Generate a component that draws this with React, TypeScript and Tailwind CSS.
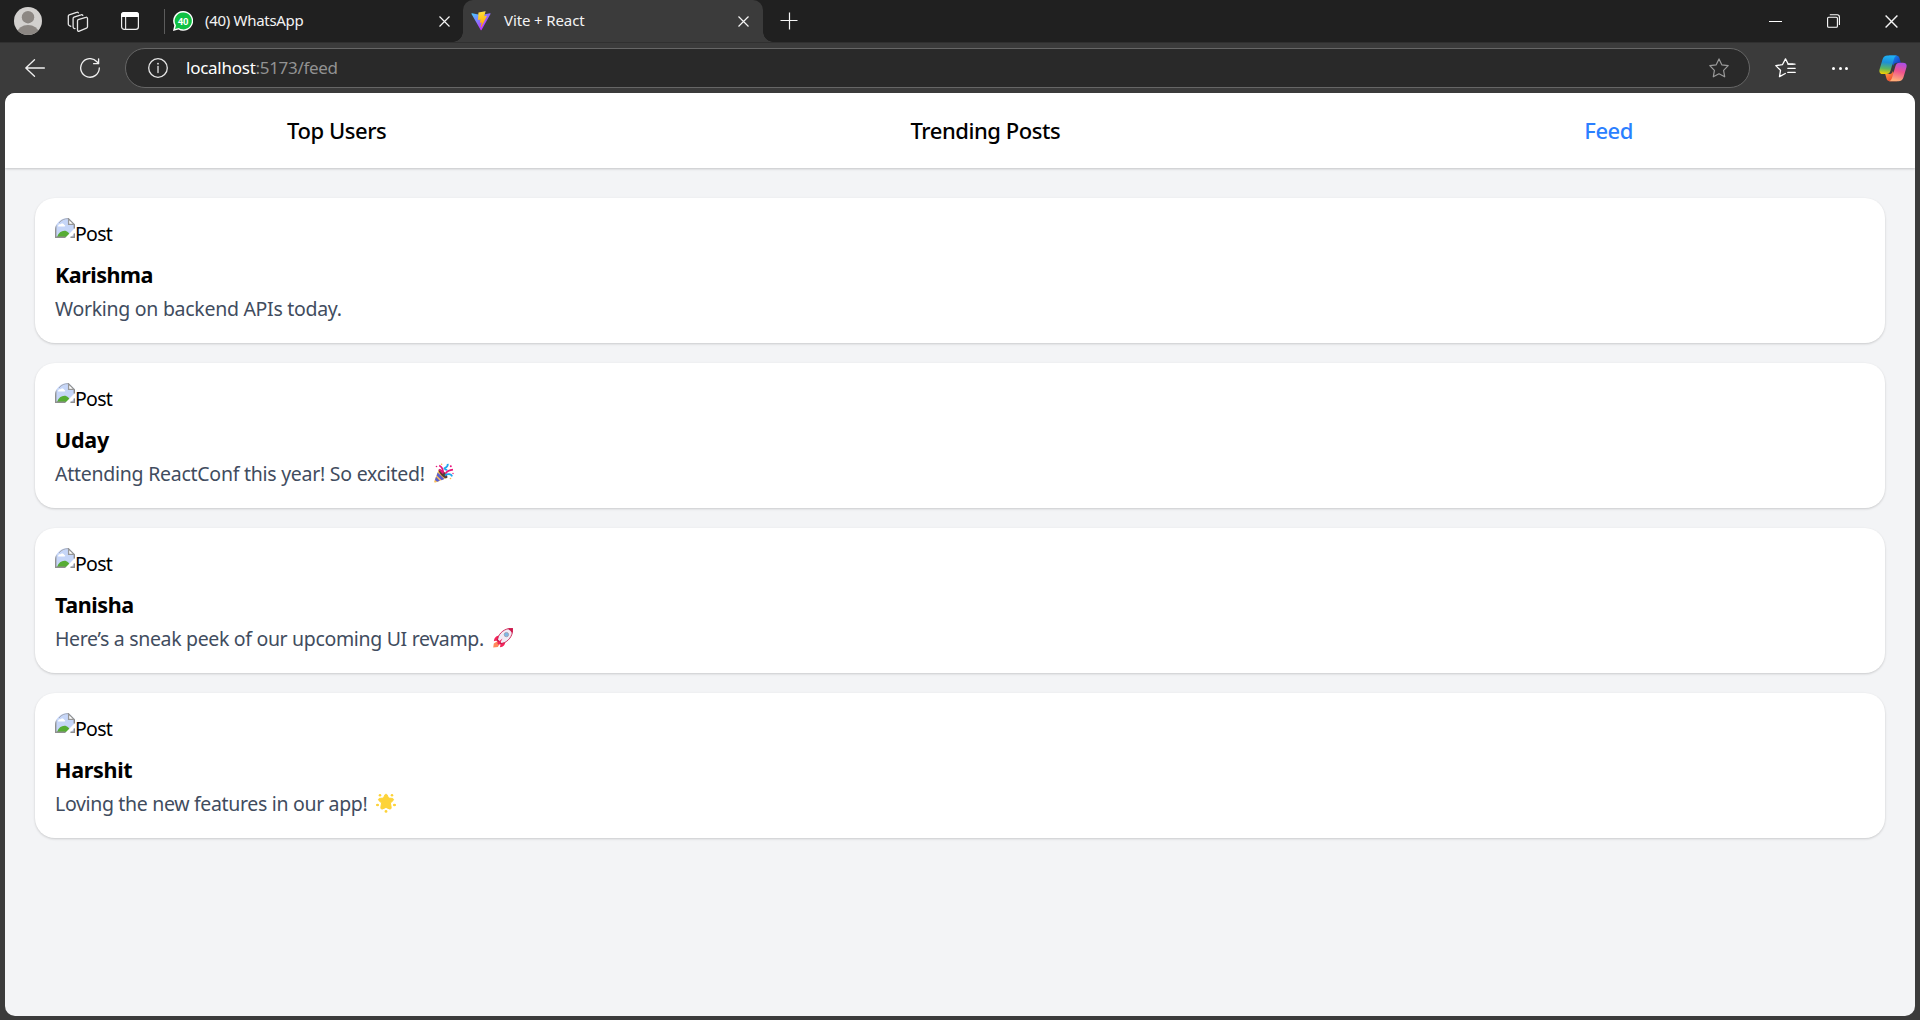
import type { ReactNode } from "react";

function CloseIcon({ size = 11 }: { size?: number }) {
  return (
    <svg width={size} height={size} viewBox="0 0 11 11" fill="none" stroke="#f5f5f5" strokeWidth="1.2">
      <path d="M.5.5l10 10M10.5.5l-10 10" />
    </svg>
  );
}

function AvatarIcon() {
  return (
    <svg width="28" height="28" viewBox="0 0 28 28">
      <defs>
        <clipPath id="avatar">
          <circle cx="14" cy="14" r="14" />
        </clipPath>
      </defs>
      <circle cx="14" cy="14" r="14" fill="#d2d0ce" />
      <g clipPath="url(#avatar)" fill="#8c8783">
        <circle cx="14" cy="10.2" r="6.2" />
        <ellipse cx="14" cy="25.3" rx="10.5" ry="7.3" />
      </g>
    </svg>
  );
}

function WorkspacesIcon() {
  return (
    <svg width="22" height="22" viewBox="0 0 22 22" fill="none" stroke="#e6e6e6" strokeWidth="1.3" strokeLinejoin="round" strokeLinecap="round">
      <path d="M11.2 8.6l7.6-2.3c.9-.3 1.7.3 1.7 1.2v8.3c0 .7-.4 1.200-1 1.400l-7.2 3c-.9.4-1.800-.2-1.800-1.200V9.800c0-.6.2-1 .7-1.200z" />
      <path d="M8 17.600l-1-.3c-.6-.3-.9-.8-.9-1.500V7.500c0-.6.3-1.100.9-1.300L14 3.800c.8-.3 1.500 0 1.800.6" />
      <path d="M3.800 15.300l-1.600-.8c-.6-.3-.9-.8-.9-1.500V5.100c0-.6.3-1.100.9-1.300l7.400-2.500c.8-.3 1.400 0 1.800.5" />
    </svg>
  );
}

function TabActionsIcon() {
  return (
    <svg width="18" height="18" viewBox="0 0 18 18" fill="none">
      <rect x=".6" y=".6" width="16.800" height="16.800" rx="2.600" stroke="#f0f0f0" strokeWidth="1.200" />
      <path d="M0 5V3a3 3 0 013-3h12a3 3 0 013 3v2z" fill="#fff" />
      <path d="M4.600 5v12.500" stroke="#e0e0e0" strokeWidth="1.200" />
    </svg>
  );
}

function WhatsAppBadge() {
  return (
    <svg width="20" height="20" viewBox="0 0 20 20">
      <path d="M10.200 0a9.800 9.900 0 11-4.700 18.500L0 19.900l1.300-5.300A9.800 9.900 0 0110.200 0z" fill="#fff" />
      <path d="M10.200 1.400a8.400 8.500 0 11-4.400 15.600L2 18l1-3.600A8.400 8.500 0 0110.200 1.400z" fill="#0fc143" />
      <text x="10.100" y="13.500" textAnchor="middle" fill="#fff" fontSize="9.500" fontWeight="700" fontFamily="Roboto, sans-serif" textLength="10.500">
        40
      </text>
    </svg>
  );
}

function ViteLogo() {
  return (
    <svg width="20" height="20" viewBox="0 0 410 404" fill="none">
      <defs>
        <linearGradient id="vite-body" x1="6" y1="33" x2="235" y2="344" gradientUnits="userSpaceOnUse">
          <stop stopColor="#41D1FF" />
          <stop offset="1" stopColor="#BD34FE" />
        </linearGradient>
        <linearGradient id="vite-bolt" x1="194.651" y1="8.818" x2="236.076" y2="292.989" gradientUnits="userSpaceOnUse">
          <stop stopColor="#FFEA83" />
          <stop offset=".083" stopColor="#FFDD35" />
          <stop offset="1" stopColor="#FFA800" />
        </linearGradient>
      </defs>
      <path d="M399.641 59.525L215.643 388.545c-3.799 6.793-13.559 6.834-17.415.073L10.582 59.556C6.380 52.190 12.680 43.267 21.028 44.759l184.195 32.923c1.175.21 2.378.208 3.553-.006l180.343-32.870c8.320-1.517 14.649 7.337 10.522 14.719z" fill="url(#vite-body)" />
      <path d="M292.965 1.574L156.801 28.255c-2.238.439-3.906 2.332-4.040 4.609l-8.376 141.464c-.197 3.332 2.863 5.918 6.115 5.168l37.910-8.749c3.547-.818 6.752 2.306 6.023 5.873l-11.263 55.153c-.758 3.712 2.727 6.886 6.352 5.785l23.415-7.114c3.630-1.102 7.118 2.081 6.350 5.796l-17.899 86.633c-1.120 5.419 6.088 8.374 9.094 3.728l2.008-3.103 110.954-221.428c1.858-3.707-1.346-7.935-5.418-7.149l-39.022 7.531c-3.667.707-6.787-2.708-5.752-6.296l25.469-88.291c1.036-3.594-2.094-7.012-5.756-6.291z" fill="url(#vite-bolt)" />
    </svg>
  );
}

function StarIcon() {
  return (
    <svg width="20" height="20" viewBox="0 0 20 20" fill="none" stroke="#9a9a9a" strokeWidth="1.200" strokeLinejoin="round">
      <path d="M10 .9l2.800 5.900 6.400.9-4.600 4.600 1.100 6.500L10 15.800l-5.700 3 1.100-6.500L.8 7.700l6.400-.9z" />
    </svg>
  );
}

function FavoritesIcon() {
  return (
    <svg width="21" height="20" viewBox="0 0 21 20" fill="none" stroke="#fff" strokeWidth="1.300" strokeLinejoin="round" strokeLinecap="round">
      <path d="M18 6.200h-4.700L10.500.9 7.400 6.700.8 7.600l4.700 4.700-1 6.300 5.800-3.100" />
      <path d="M13 6.200h7M12.800 10.300h7.400M12.800 14.400h7.400" />
    </svg>
  );
}

function CopilotIcon() {
  return (
    <svg width="28" height="27" viewBox="0 0 28 27">
      <defs>
        <linearGradient id="cp-left" x1="8" y1="1" x2="6" y2="19" gradientUnits="userSpaceOnUse">
          <stop stopColor="#1fb0f2" />
          <stop offset=".35" stopColor="#1c8fd8" />
          <stop offset=".7" stopColor="#5cb660" />
          <stop offset="1" stopColor="#f5d000" />
        </linearGradient>
        <linearGradient id="cp-top" x1="13" y1="1" x2="20" y2="8" gradientUnits="userSpaceOnUse">
          <stop stopColor="#1b8cf0" />
          <stop offset="1" stopColor="#173fc4" />
        </linearGradient>
        <linearGradient id="cp-right" x1="23" y1="7" x2="18" y2="26" gradientUnits="userSpaceOnUse">
          <stop stopColor="#a44df0" />
          <stop offset=".5" stopColor="#f0538d" />
          <stop offset="1" stopColor="#ffb078" />
        </linearGradient>
        <linearGradient id="cp-bottom" x1="8" y1="19" x2="14" y2="26" gradientUnits="userSpaceOnUse">
          <stop stopColor="#ff8a3d" />
          <stop offset="1" stopColor="#e8402f" />
        </linearGradient>
      </defs>
      <path d="M10 .6h7c2 0 3 .9 3.500 2.700l1.300 4.400h-3.500c-2.300 0-3.500 1-4.200 3.200z" fill="url(#cp-top)" />
      <path d="M18 26.200h-7c-2 0-3-.9-3.500-2.700l-1.300-4.400h3.500c2.300 0 3.500-1 4.200-3.200z" fill="url(#cp-bottom)" />
      <path d="M8.800.6H18c-1.800.4-2.500 1.700-3.100 3.700l-3.300 11.300c-.7 2.500-2 3.500-4.300 3.500H4c-3 0-4.200-1.900-3.400-4.800L3.500 4.500C4.300 1.900 5.900.6 8.800.6z" fill="url(#cp-left)" />
      <path d="M19.200 26.200H10c1.800-.4 2.500-1.700 3.100-3.700l3.300-11.300c.7-2.500 2-3.500 4.300-3.500H24c3 0 4.200 1.900 3.400 4.800l-2.900 9.800c-.8 2.600-2.400 3.900-5.300 3.900z" fill="url(#cp-right)" />
    </svg>
  );
}

function BrokenImageIcon() {
  return (
    <svg width="20" height="20" viewBox="0 0 20 20" className="shrink-0">
      <defs>
        <clipPath id="corner">
          <path d="M0 20V12.500A12.500 12.500 0 0112.500 0H14l6 6v14z" />
        </clipPath>
      </defs>
      <g clipPath="url(#corner)">
        <path d="M0 0h14l6 6v14H0z" fill="#c6d6f8" />
        <path d="M3 8.500c0-2 1.600-2.500 2.500-2.200.5-1.300 3.500-1.300 3.800.7 1.200.2 1.200 1.500.2 1.500z" fill="#fff" />
        <path d="M2 19c1.500-4.200 4.200-6.300 7.500-6.300 2.500 0 5.500 2.500 6.500 6.300z" fill="#56ac35" />
        <path d="M10 20L20 10v4.800L15 20z" fill="#fff" />
        <path d="M.7 0v19.300H10.500M19.300 6v4.500M19.300 15.500v3.800H15.500" stroke="#8f8f8f" strokeWidth="1.400" fill="none" />
        <path d="M4 5C6.500 1.800 9.500.6 13.300.6" stroke="#a5a9b3" strokeWidth="1" fill="none" />
        <path d="M13.600.8v5.600h5.600z" fill="#fff" stroke="#969696" strokeWidth="1.300" />
      </g>
    </svg>
  );
}

function PartyEmoji() {
  return (
    <svg width="20" height="20" viewBox="0 0 20 20">
      <path d="M4.800 6.500C8 6 13 10.500 13.200 14.800L1.600 19.500C.5 19.800 0 19.200.2 18.200z" fill="#fcc05c" />
      <path d="M3.600 9.600l6.700 6.500-2.700 1.100-5-4.800zM2 13.800l3.800 4-2.600 1L1 16.900z" fill="#5a5fd0" />
      <path d="M5 6.300c2-1 8.700 4.900 8.500 8-.6 1.700-3 1-5.200-1.100C5.800 11 3.900 7.600 5 6.300z" fill="#5b3b35" />
      <path d="M5.200 2.500c2.500 1.300 4 4 3.800 7.300M9 10.500c-.8-2-2.200-3.200-4-4" stroke="#e8177c" strokeWidth="1.800" fill="none" />
      <path d="M13.800.8c.3 2.200-1.200 3.400-3.300 4.500.5 1.200 1.400 1.600 2.800 1.500" stroke="#20a5ee" strokeWidth="1.800" fill="none" />
      <path d="M11.500 10.500c1.700-2.300 4.300-3.500 7.500-3.800" stroke="#e8177c" strokeWidth="1.800" fill="none" />
      <path d="M11 12.500c3.200-2.200 6-1.500 7.200.8" stroke="#20a5ee" strokeWidth="1.800" fill="none" />
      <circle cx="2.500" cy="3.500" r=".8" fill="#e8177c" />
      <circle cx="7.600" cy="1.300" r=".8" fill="#fcb94d" />
      <circle cx="16.800" cy="3.300" r="1" fill="#e8177c" />
      <circle cx="16.500" cy="15.500" r=".8" fill="#fcb94d" />
      <circle cx="19" cy="10.500" r=".7" fill="#e8177c" />
    </svg>
  );
}

function RocketEmoji() {
  return (
    <svg width="20" height="20" viewBox="0 0 20 20">
      <path d="M4.700 13L.8 15.600.2 19.600l4.600-.6 2.300-3.600z" fill="#ff8a5c" />
      <path d="M6.300 7.800C3.300 7.600 1.300 9.500.8 13.200l4.400-1zM12.200 13.700c.2 3-1.600 5-5.300 5.600l1-4.500z" fill="#f4245a" />
      <path d="M19.700.3C13.500.2 8.700 2.600 5.500 8.200L4.200 12.600l3.200 3.200 4.400-1.300C17.400 11.300 19.800 6.500 19.700.3z" fill="#f1ecf5" stroke="#cc174b" strokeWidth=".9" />
      <path d="M19.800.2c.1 2-.1 3.600-.6 5.300C18 3.300 16.700 2 14.500.8c1.700-.4 3.400-.6 5.300-.6zM4.500 11l4.500 4.500-1.600.9-3.800-3.800z" fill="#cc174b" />
      <path d="M9.500 10.500L4 15l2 2z" fill="#f4245a" />
      <circle cx="13.400" cy="6.600" r="2.200" fill="#7cb8e8" stroke="#9b9ba8" strokeWidth=".8" />
    </svg>
  );
}

function StarEmoji() {
  return (
    <svg width="20" height="20" viewBox="0 0 20 20" fill="#fdd339">
      <path d="M10 1.200c.5 0 .9.200 1.100.7l1.500 3.200 3.700.3c1.200.1 1.600 1.400.8 2.100l-2.700 2.500.8 4.500c.2 1.100-.9 1.900-1.900 1.400L10 14.400l-3.300 1.500c-1 .5-2.100-.3-1.900-1.400l.8-4.500-2.700-2.500c-.8-.7-.4-2 .8-2.100l3.700-.3 1.500-3.200c.2-.5.600-.7 1.100-.7z" stroke="#fdd339" />
      <circle cx="4" cy="2.200" r="1.300" />
      <circle cx="16" cy="2.200" r="1.300" />
      <ellipse cx="1.500" cy="12" rx="1.600" ry="1.200" />
      <ellipse cx="18.500" cy="12" rx="1.600" ry="1.200" />
      <circle cx="10" cy="18.400" r="1.400" />
    </svg>
  );
}

function TitleBar() {
  return (
    <div className="flex h-[42px] bg-[#202020] text-[15px] text-[#f3f3f3]">
      <div className="flex w-[463px] items-center">
        <div className="ml-[14px]">
          <AvatarIcon />
        </div>
        <div className="ml-[25px] pt-px">
          <WorkspacesIcon />
        </div>
        <div className="ml-[32px]">
          <TabActionsIcon />
        </div>
        <div className="ml-[25px] h-[25px] w-px bg-[#5c5c5c]" />
        <div className="ml-[8px]">
          <WhatsAppBadge />
        </div>
        <span className="ml-[12px] pb-[2px] tracking-[-0.300px]">(40) WhatsApp</span>
        <div className="mr-[13px] ml-auto pt-px">
          <CloseIcon />
        </div>
      </div>
      <div className="relative flex w-[300px] items-center rounded-t-[10px] bg-[#3b3b3b]">
        <div className="absolute right-full bottom-0 size-[10px] bg-[radial-gradient(circle_at_0_0,#202020_9.500px,#3b3b3b_10px)]" />
        <div className="absolute bottom-0 left-full size-[10px] bg-[radial-gradient(circle_at_100%_0,#202020_9.500px,#3b3b3b_10px)]" />
        <div className="ml-[8px]">
          <ViteLogo />
        </div>
        <span className="ml-[13px] pb-[2px] tracking-[-0.120px]">Vite + React</span>
        <div className="mr-[14px] ml-auto pt-px">
          <CloseIcon />
        </div>
      </div>
      <div className="flex grow items-center">
        <svg className="ml-[17px]" width="18" height="18" viewBox="0 0 18 18" fill="none" stroke="#f5f5f5" strokeWidth="1.200">
          <path d="M9.500 .5v17M.5 8.500h17" />
        </svg>
        <div className="mr-[22px] ml-auto flex items-center">
          <div className="mr-[45px] h-px w-[13px] bg-white" />
          <svg className="mr-[45px]" width="13" height="14" viewBox="0 0 13 14" fill="none" stroke="#fff" strokeWidth="1.100">
            <rect x=".6" y="3.200" width="9.800" height="10" rx="1" />
            <path d="M2.800.8h7.400a2.200 2.200 0 012.200 2.200v8" />
          </svg>
          <CloseIcon size={13} />
        </div>
      </div>
    </div>
  );
}

function Toolbar() {
  return (
    <div className="flex h-[51px] items-center border-t border-[#303030] bg-[#3b3b3b]">
      <svg className="ml-[25px]" width="20" height="18" viewBox="0 0 20 18" fill="none" stroke="#f0f0f0" strokeWidth="1.300" strokeLinecap="round" strokeLinejoin="round">
        <path d="M9.500.8L.8 9l8.700 8.200M.8 9h18.600" />
      </svg>
      <svg className="ml-[35px]" width="20" height="20" viewBox="0 0 20 20" fill="none" stroke="#f0f0f0" strokeWidth="1.300" strokeLinecap="round" strokeLinejoin="round">
        <path d="M19.300 10A9.300 9.300 0 1116.900 3.700l1.700 1.800M18.600.8v4.900h-5" />
      </svg>
      <div className="ml-[25px] flex h-[40px] w-[1625px] items-center rounded-full border border-[#666] bg-[#292929] pr-[20px] pl-[21.500px]">
        <svg width="20" height="20" viewBox="0 0 20 20" fill="none" stroke="#e6e6e6" strokeWidth="1.300">
          <circle cx="10" cy="10" r="9.300" />
          <path d="M10 8.500v6" strokeLinecap="round" />
          <circle cx="10" cy="5.700" r=".9" fill="#e6e6e6" stroke="none" />
        </svg>
        <span className="ml-[18.500px] pb-px text-[17px] tracking-[-0.250px] text-white">localhost</span>
        <span className="pb-px text-[17px] tracking-[-0.320px] text-[#929292]">:5173/feed</span>
        <div className="ml-auto">
          <StarIcon />
        </div>
      </div>
      <div className="ml-[25px]">
        <FavoritesIcon />
      </div>
      <div className="ml-[36px] flex gap-[3.500px]">
        <div className="size-[3px] rounded-full bg-white" />
        <div className="size-[3px] rounded-full bg-white" />
        <div className="size-[3px] rounded-full bg-white" />
      </div>
      <div className="ml-[31px]">
        <CopilotIcon />
      </div>
    </div>
  );
}

type Post = { user: string; nameClass: string; text: string; textClass: string; emoji?: ReactNode };

const posts: Post[] = [
  { user: "Karishma", nameClass: "tracking-[-0.480px]", text: "Working on backend APIs today.", textClass: "tracking-[-0.290px]" },
  { user: "Uday", nameClass: "tracking-[-0.250px]", text: "Attending ReactConf this year! So excited!", textClass: "tracking-[-0.260px]", emoji: <PartyEmoji /> },
  { user: "Tanisha", nameClass: "tracking-[-0.400px]", text: "Here’s a sneak peek of our upcoming UI revamp.", textClass: "tracking-[-0.330px]", emoji: <RocketEmoji /> },
  { user: "Harshit", nameClass: "tracking-[-0.300px]", text: "Loving the new features in our app!", textClass: "tracking-[-0.330px]", emoji: <StarEmoji /> },
];

function PostCard({ post }: { post: Post }) {
  return (
    <article className="h-[145px] rounded-[20px] bg-white p-[20px] shadow-[0_1px_3px_rgba(0,0,0,0.1),0_1px_2px_rgba(0,0,0,0.08)]">
      <div className="mb-[10px] flex h-[30px] text-[19.500px] leading-[30px] tracking-[-0.700px]">
        <BrokenImageIcon />
        <span className="pt-px">Post</span>
      </div>
      <h3 className="h-[35px] text-[21.500px] leading-[34px] font-bold">
        <span className={post.nameClass}>{post.user}</span>
      </h3>
      <p className="flex h-[30px] pt-px text-[19.500px] leading-[30px] text-[#414c5e]">
        <span className={post.textClass}>{post.text}</span>
        {post.emoji && <span className="ml-[9px] pt-[4px]">{post.emoji}</span>}
      </p>
    </article>
  );
}

export default function App() {
  return (
    <div className="flex h-[1020px] w-[1920px] flex-col overflow-hidden bg-[#3b3b3b] font-['Noto_Sans',sans-serif]">
      <TitleBar />
      <Toolbar />
      <main className="mx-[5px] h-[923px] overflow-hidden rounded-[10px] bg-[#f3f4f6] text-black">
        <nav className="flex h-[75px] items-center justify-around bg-white px-[20px] text-[22px] font-medium shadow-[0_1px_3px_rgba(0,0,0,0.1),0_1px_2px_rgba(0,0,0,0.1)]">
          <a className="tracking-[-0.450px]">Top Users</a>
          <a className="tracking-[-0.450px]">Trending Posts</a>
          <a className="tracking-[-0.500px] text-[#2b7fff]">Feed</a>
        </nav>
        <div className="flex flex-col gap-[20px] p-[30px]">
          {posts.map((post) => (
            <PostCard key={post.user} post={post} />
          ))}
        </div>
      </main>
    </div>
  );
}
